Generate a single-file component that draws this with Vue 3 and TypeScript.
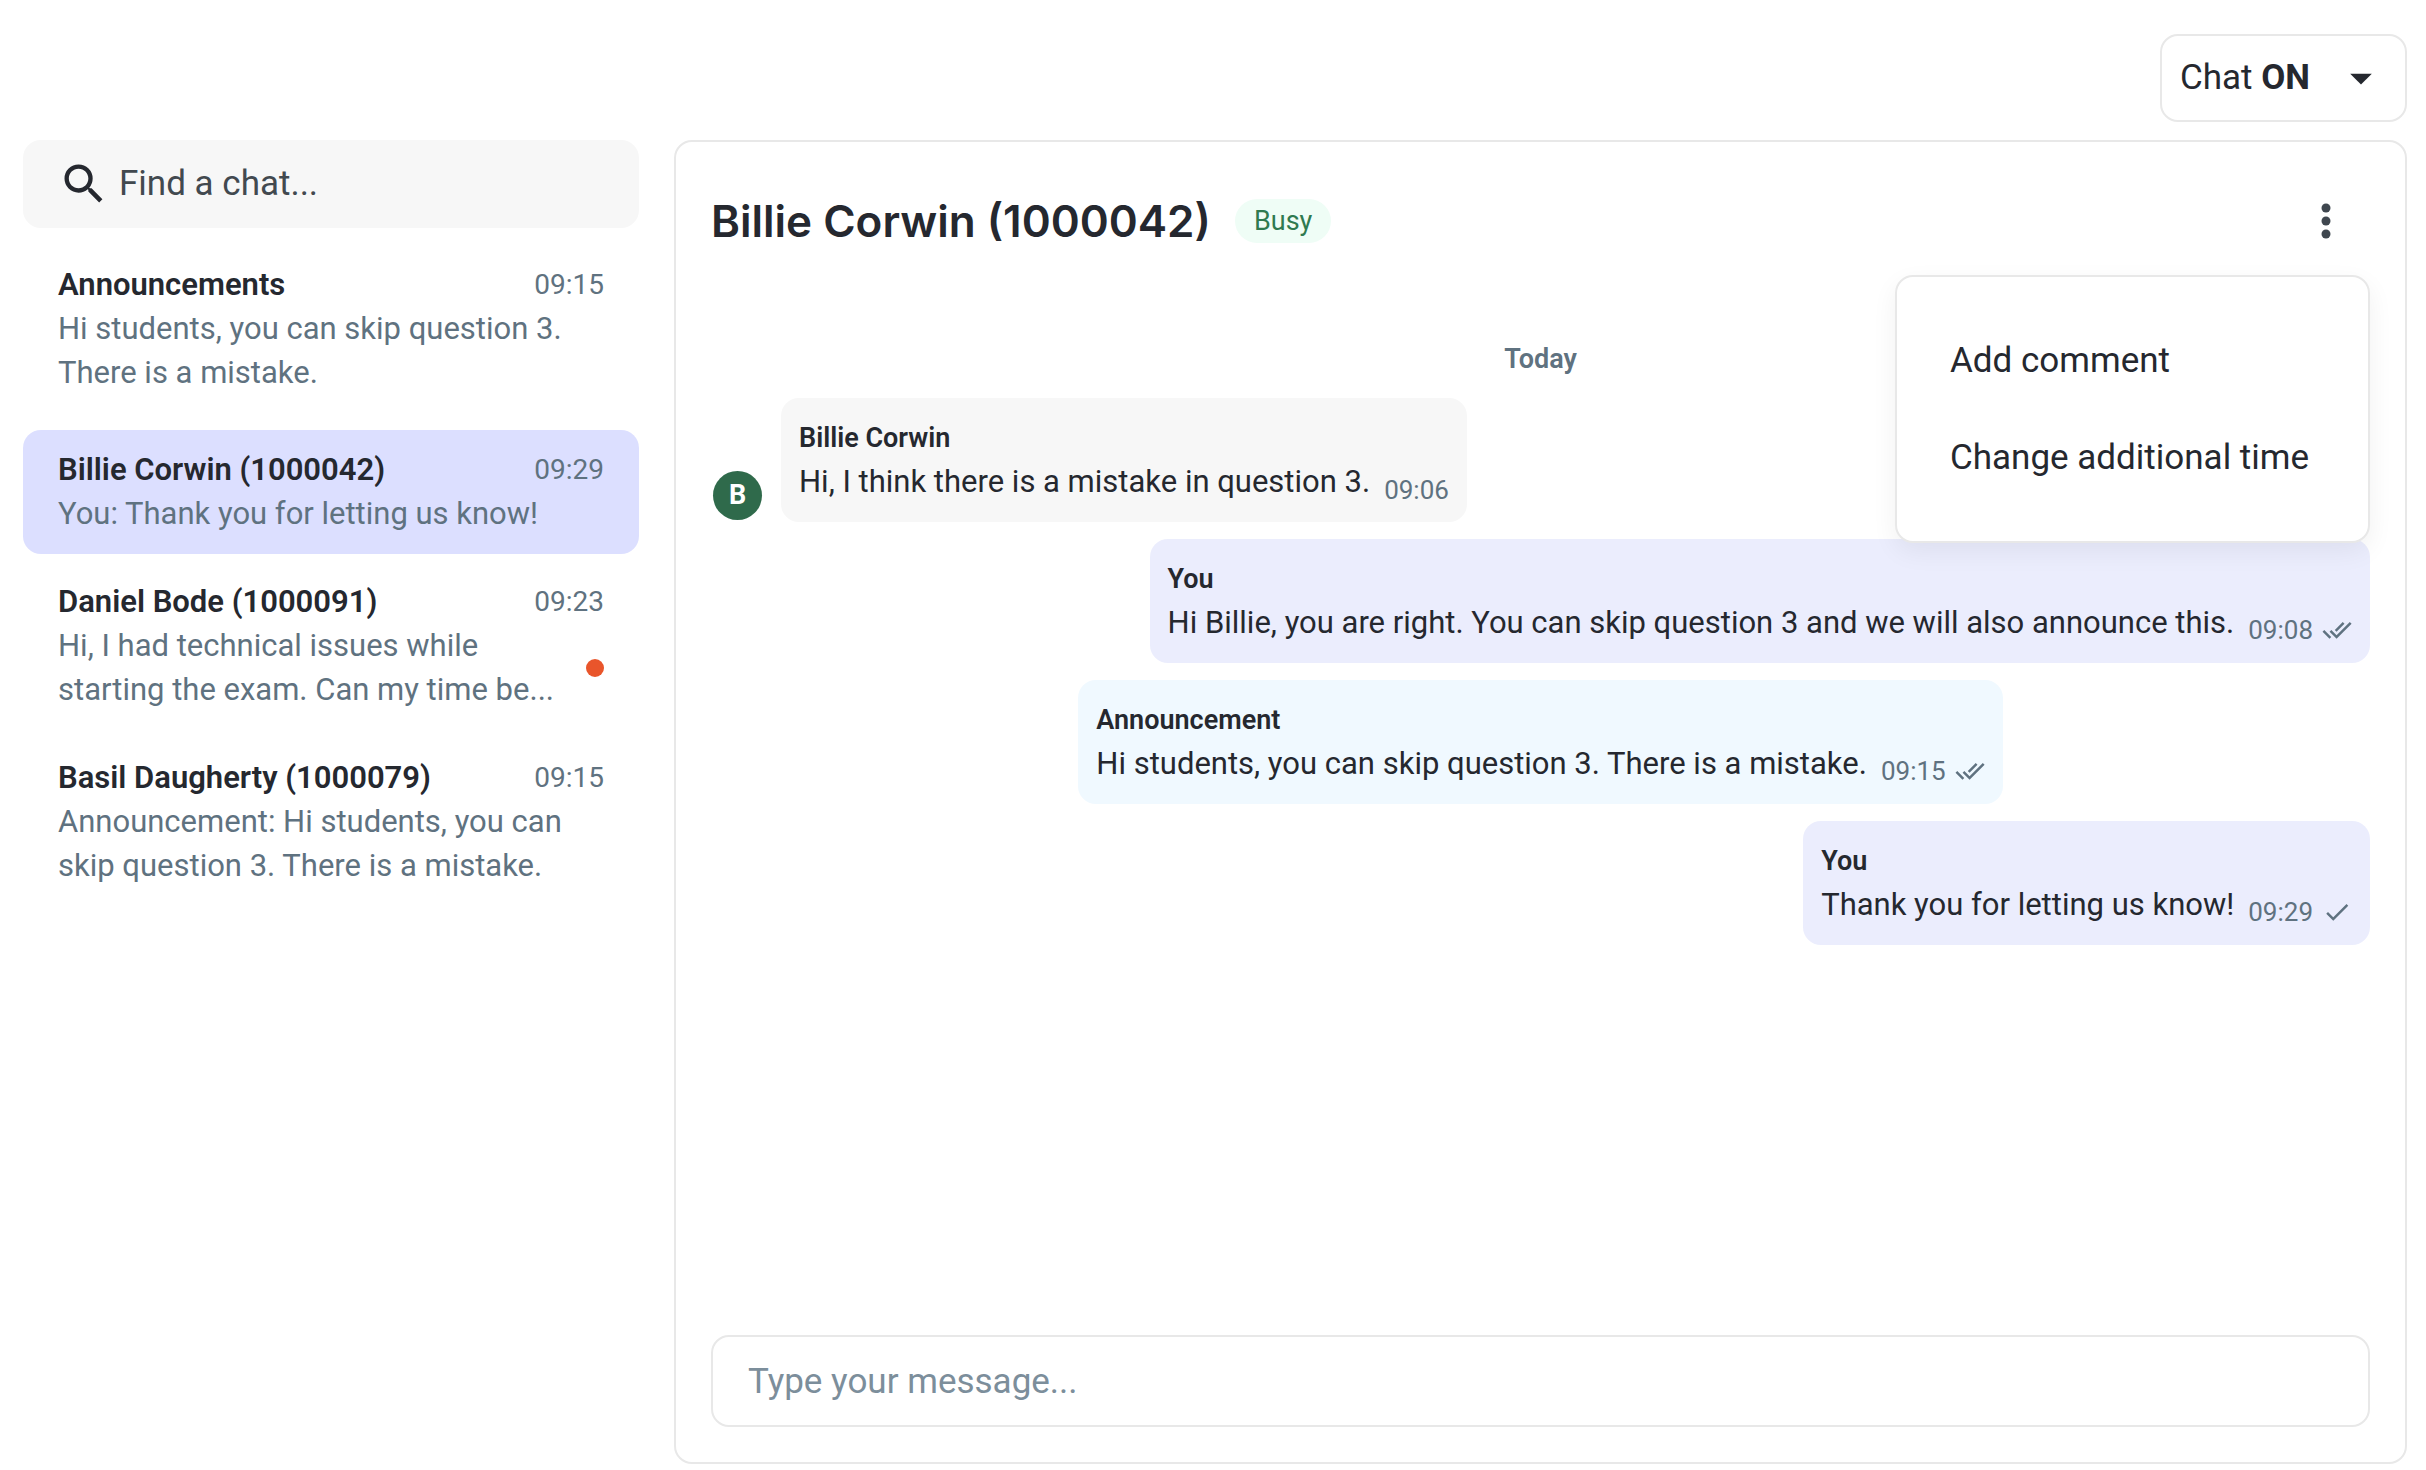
<script setup lang="ts">
import { ref } from 'vue'

interface Chat {
  id: string
  name: string
  time: string
  preview: string
  unread?: boolean
  pinned?: boolean
}

interface Message {
  id: number
  kind: 'incoming' | 'outgoing' | 'announcement'
  author: string
  text: string
  time: string
  status?: 'sent' | 'read'
}

const chats: Chat[] = [
  { id: 'all', name: 'Announcements', time: '09:15', preview: 'Hi students, you can skip question 3. There is a mistake.', pinned: true },
  { id: '1000042', name: 'Billie Corwin (1000042)', time: '09:29', preview: 'You: Thank you for letting us know!' },
  { id: '1000091', name: 'Daniel Bode (1000091)', time: '09:23', preview: 'Hi, I had technical issues while starting the exam. Can my time be...', unread: true },
  { id: '1000079', name: 'Basil Daugherty (1000079)', time: '09:15', preview: 'Announcement: Hi students, you can skip question 3. There is a mistake.' },
]

const messages: Message[] = [
  { id: 1, kind: 'incoming', author: 'Billie Corwin', text: 'Hi, I think there is a mistake in question 3.', time: '09:06' },
  { id: 2, kind: 'outgoing', author: 'You', text: 'Hi Billie, you are right. You can skip question 3 and we will also announce this.', time: '09:08', status: 'read' },
  { id: 3, kind: 'announcement', author: 'Announcement', text: 'Hi students, you can skip question 3. There is a mistake.', time: '09:15', status: 'read' },
  { id: 4, kind: 'outgoing', author: 'You', text: 'Thank you for letting us know!', time: '09:29', status: 'sent' },
]

const selected = ref('1000042')
const menuOpen = ref(true)
const search = ref('')
const draft = ref('')
</script>

<template>
  <div class="page">
    <header class="topbar">
      <button type="button" class="chat-toggle" aria-haspopup="listbox">
        <span>Chat <strong>ON</strong></span>
        <svg class="icon" viewBox="0 0 24 24" aria-hidden="true"><path d="M7 10l5 5 5-5z" /></svg>
      </button>
    </header>

    <div class="columns">
      <aside class="sidebar">
        <label class="search">
          <svg class="icon" viewBox="0 0 24 24" aria-hidden="true">
            <path d="M15.5 14h-.79l-.28-.27A6.47 6.47 0 0 0 16 9.5 6.5 6.5 0 1 0 9.5 16c1.61 0 3.09-.59 4.23-1.57l.27.28v.79l5 4.99L20.49 19l-4.99-5zm-6 0C7.01 14 5 11.99 5 9.5S7.01 5 9.5 5 14 7.01 14 9.5 11.99 14 9.5 14z" />
          </svg>
          <input v-model="search" type="text" placeholder="Find a chat..." aria-label="Find a chat" />
        </label>

        <ul class="chats">
          <li v-for="chat in chats" :key="chat.id" :class="{ pinned: chat.pinned }">
            <button type="button" class="chat" :class="{ active: chat.id === selected }" @click="selected = chat.id">
              <span class="chat-head">
                <span class="chat-name">{{ chat.name }}</span>
                <span class="chat-time">{{ chat.time }}</span>
              </span>
              <span class="chat-body">
                <span class="preview">{{ chat.preview }}</span>
                <span v-if="chat.unread" class="dot"></span>
              </span>
            </button>
          </li>
        </ul>
      </aside>

      <main class="panel">
        <div class="panel-head">
          <h1>Billie Corwin (1000042)</h1>
          <span class="badge">Busy</span>
          <button type="button" class="kebab" aria-label="More actions" :aria-expanded="menuOpen" @click="menuOpen = !menuOpen">
            <svg viewBox="0 0 24 48" aria-hidden="true">
              <circle cx="12" cy="11" r="4.5" />
              <circle cx="12" cy="24" r="4.5" />
              <circle cx="12" cy="37" r="4.5" />
            </svg>
          </button>
          <div v-if="menuOpen" class="menu" role="menu">
            <button type="button" role="menuitem">Add comment</button>
            <button type="button" role="menuitem">Change additional time</button>
          </div>
        </div>

        <section class="thread">
          <p class="day">Today</p>
          <div v-for="m in messages" :key="m.id" class="row" :class="m.kind">
            <span v-if="m.kind === 'incoming'" class="avatar">{{ m.author.charAt(0) }}</span>
            <article class="bubble">
              <h2>{{ m.author }}</h2>
              <div class="line">
                <p>{{ m.text }}</p>
                <span class="meta">
                  <time>{{ m.time }}</time>
                  <svg v-if="m.status === 'read'" viewBox="0 0 24 24" aria-label="Read">
                    <path d="M18 7l-1.41-1.41-6.34 6.34 1.41 1.41L18 7zm4.24-1.41L11.66 16.17 7.48 12l-1.41 1.41L11.66 19l12-12-1.42-1.41zM.41 13.41L6 19l1.41-1.41L1.83 12 .41 13.41z" />
                  </svg>
                  <svg v-else-if="m.status === 'sent'" viewBox="0 0 24 24" aria-label="Sent">
                    <path d="M9 16.2L4.8 12l-1.4 1.4L9 19 21 7l-1.4-1.4L9 16.2z" />
                  </svg>
                </span>
              </div>
            </article>
          </div>
        </section>

        <input v-model="draft" class="composer" type="text" placeholder="Type your message..." aria-label="Type your message" />
      </main>
    </div>
  </div>
</template>

<style>
body {
  margin: 0;
  background: #fff;
}
</style>

<style scoped>
* {
  box-sizing: border-box;
}

.page {
  display: flex;
  flex-direction: column;
  gap: 18px;
  min-height: 100vh;
  padding: 34px 19px 6px 23px;
  color: #25282f;
  font-family: Roboto, "Open Sans", sans-serif;
  font-size: 31px;
  line-height: 44px;
}

button,
input {
  margin: 0;
  border: 0;
  background: none;
  color: inherit;
  font: inherit;
}

button {
  cursor: pointer;
}

h1,
h2,
p {
  margin: 0;
}

.icon {
  flex: none;
  width: 52px;
  height: 52px;
  fill: currentColor;
}

.topbar {
  display: flex;
  justify-content: flex-end;
}

.chat-toggle {
  display: flex;
  align-items: center;
  justify-content: space-between;
  gap: 16px;
  min-width: 247px;
  height: 88px;
  padding: 0 18px;
  border: 2px solid #e8e8e8;
  border-radius: 18px;
  font-size: 35px;
}

.chat-toggle strong {
  font-weight: 700;
}

.columns {
  display: flex;
  flex: 1;
  gap: 35px;
}

.sidebar {
  flex: none;
  width: 616px;
}

.search {
  display: flex;
  align-items: center;
  gap: 9px;
  height: 88px;
  padding: 0 35px;
  border-radius: 18px;
  background: #f7f7f7;
}

.search input {
  flex: 1;
  min-width: 0;
  padding: 0;
  outline: none;
  font-size: 35px;
}

.search input::placeholder {
  color: #42494f;
  opacity: 1;
}

.chats {
  display: flex;
  flex-direction: column;
  gap: 8px;
  margin: 17px 0 0;
  padding: 0;
  list-style: none;
}

.pinned {
  margin-bottom: 9px;
}

.chat {
  display: block;
  width: 100%;
  padding: 18px 35px;
  border-radius: 18px;
  text-align: left;
}

.chat.active {
  background: #dcdfff;
}

.chat-head,
.chat-body {
  display: flex;
  align-items: center;
  justify-content: space-between;
  gap: 18px;
}

.chat-name {
  font-weight: 600;
}

.chat-time {
  color: #5f7280;
  font-size: 28px;
}

.preview {
  color: #5f7280;
}

.dot {
  flex: none;
  width: 18px;
  height: 18px;
  border-radius: 50%;
  background: #e9552b;
}

.panel {
  display: flex;
  flex: 1;
  flex-direction: column;
  min-width: 0;
  padding: 35px;
  border: 2px solid #e8e8e8;
  border-radius: 18px;
}

.panel-head {
  position: relative;
  display: flex;
  align-items: center;
  height: 88px;
}

h1 {
  font-family: Inter, "Open Sans", sans-serif;
  font-size: 44px;
  font-weight: 600;
}

.badge {
  margin-left: 24px;
  padding: 0 19px;
  border-radius: 22px;
  background: #effdf6;
  color: #2f7a50;
  font-size: 27px;
}

.kebab {
  display: flex;
  justify-content: center;
  width: 88px;
  margin-left: auto;
  padding: 0;
}

.kebab svg {
  width: 24px;
  height: 48px;
  fill: #3f474f;
}

.menu {
  position: absolute;
  top: 98px;
  right: 0;
  z-index: 1;
  display: flex;
  flex-direction: column;
  min-width: 475px;
  padding: 35px 0;
  border: 2px solid #e8e8e8;
  border-radius: 18px;
  background: #fff;
  box-shadow: 0 9px 26px rgba(0, 0, 0, 0.06);
}

.menu button {
  height: 97px;
  padding: 0 53px;
  font-size: 35px;
  text-align: left;
  white-space: nowrap;
}

.thread {
  display: flex;
  flex: 1;
  flex-direction: column;
  gap: 17px;
  padding-top: 72px;
}

.day {
  color: #5f7280;
  font-size: 27px;
  font-weight: 600;
  text-align: center;
}

.row {
  display: flex;
  align-items: flex-end;
  gap: 17px;
}

.outgoing {
  justify-content: flex-end;
}

.announcement {
  justify-content: center;
}

.avatar {
  flex: none;
  width: 49px;
  height: 49px;
  margin: 2px;
  border-radius: 50%;
  background: #2f6a4b;
  color: #fff;
  font-size: 27px;
  font-weight: 700;
  line-height: 49px;
  text-align: center;
}

.bubble {
  padding: 18px;
  border-radius: 18px;
  background: #f7f7f7;
}

.outgoing .bubble {
  background: #ebedfd;
}

.announcement .bubble {
  background: #f0f9ff;
}

h2 {
  font-size: 27px;
  font-weight: 600;
}

.line {
  display: flex;
  align-items: flex-end;
  gap: 14px;
}

.meta {
  display: flex;
  align-items: center;
  gap: 9px;
  color: #5f7280;
  font-size: 26px;
  line-height: 28px;
}

.meta svg {
  width: 30px;
  height: 30px;
  fill: currentColor;
}

.composer {
  width: 100%;
  height: 92px;
  padding: 0 35px;
  border: 2px solid #e8e8e8;
  border-radius: 18px;
  outline: none;
  font-size: 35px;
}

.composer::placeholder {
  color: #7c8e9b;
  opacity: 1;
}
</style>
